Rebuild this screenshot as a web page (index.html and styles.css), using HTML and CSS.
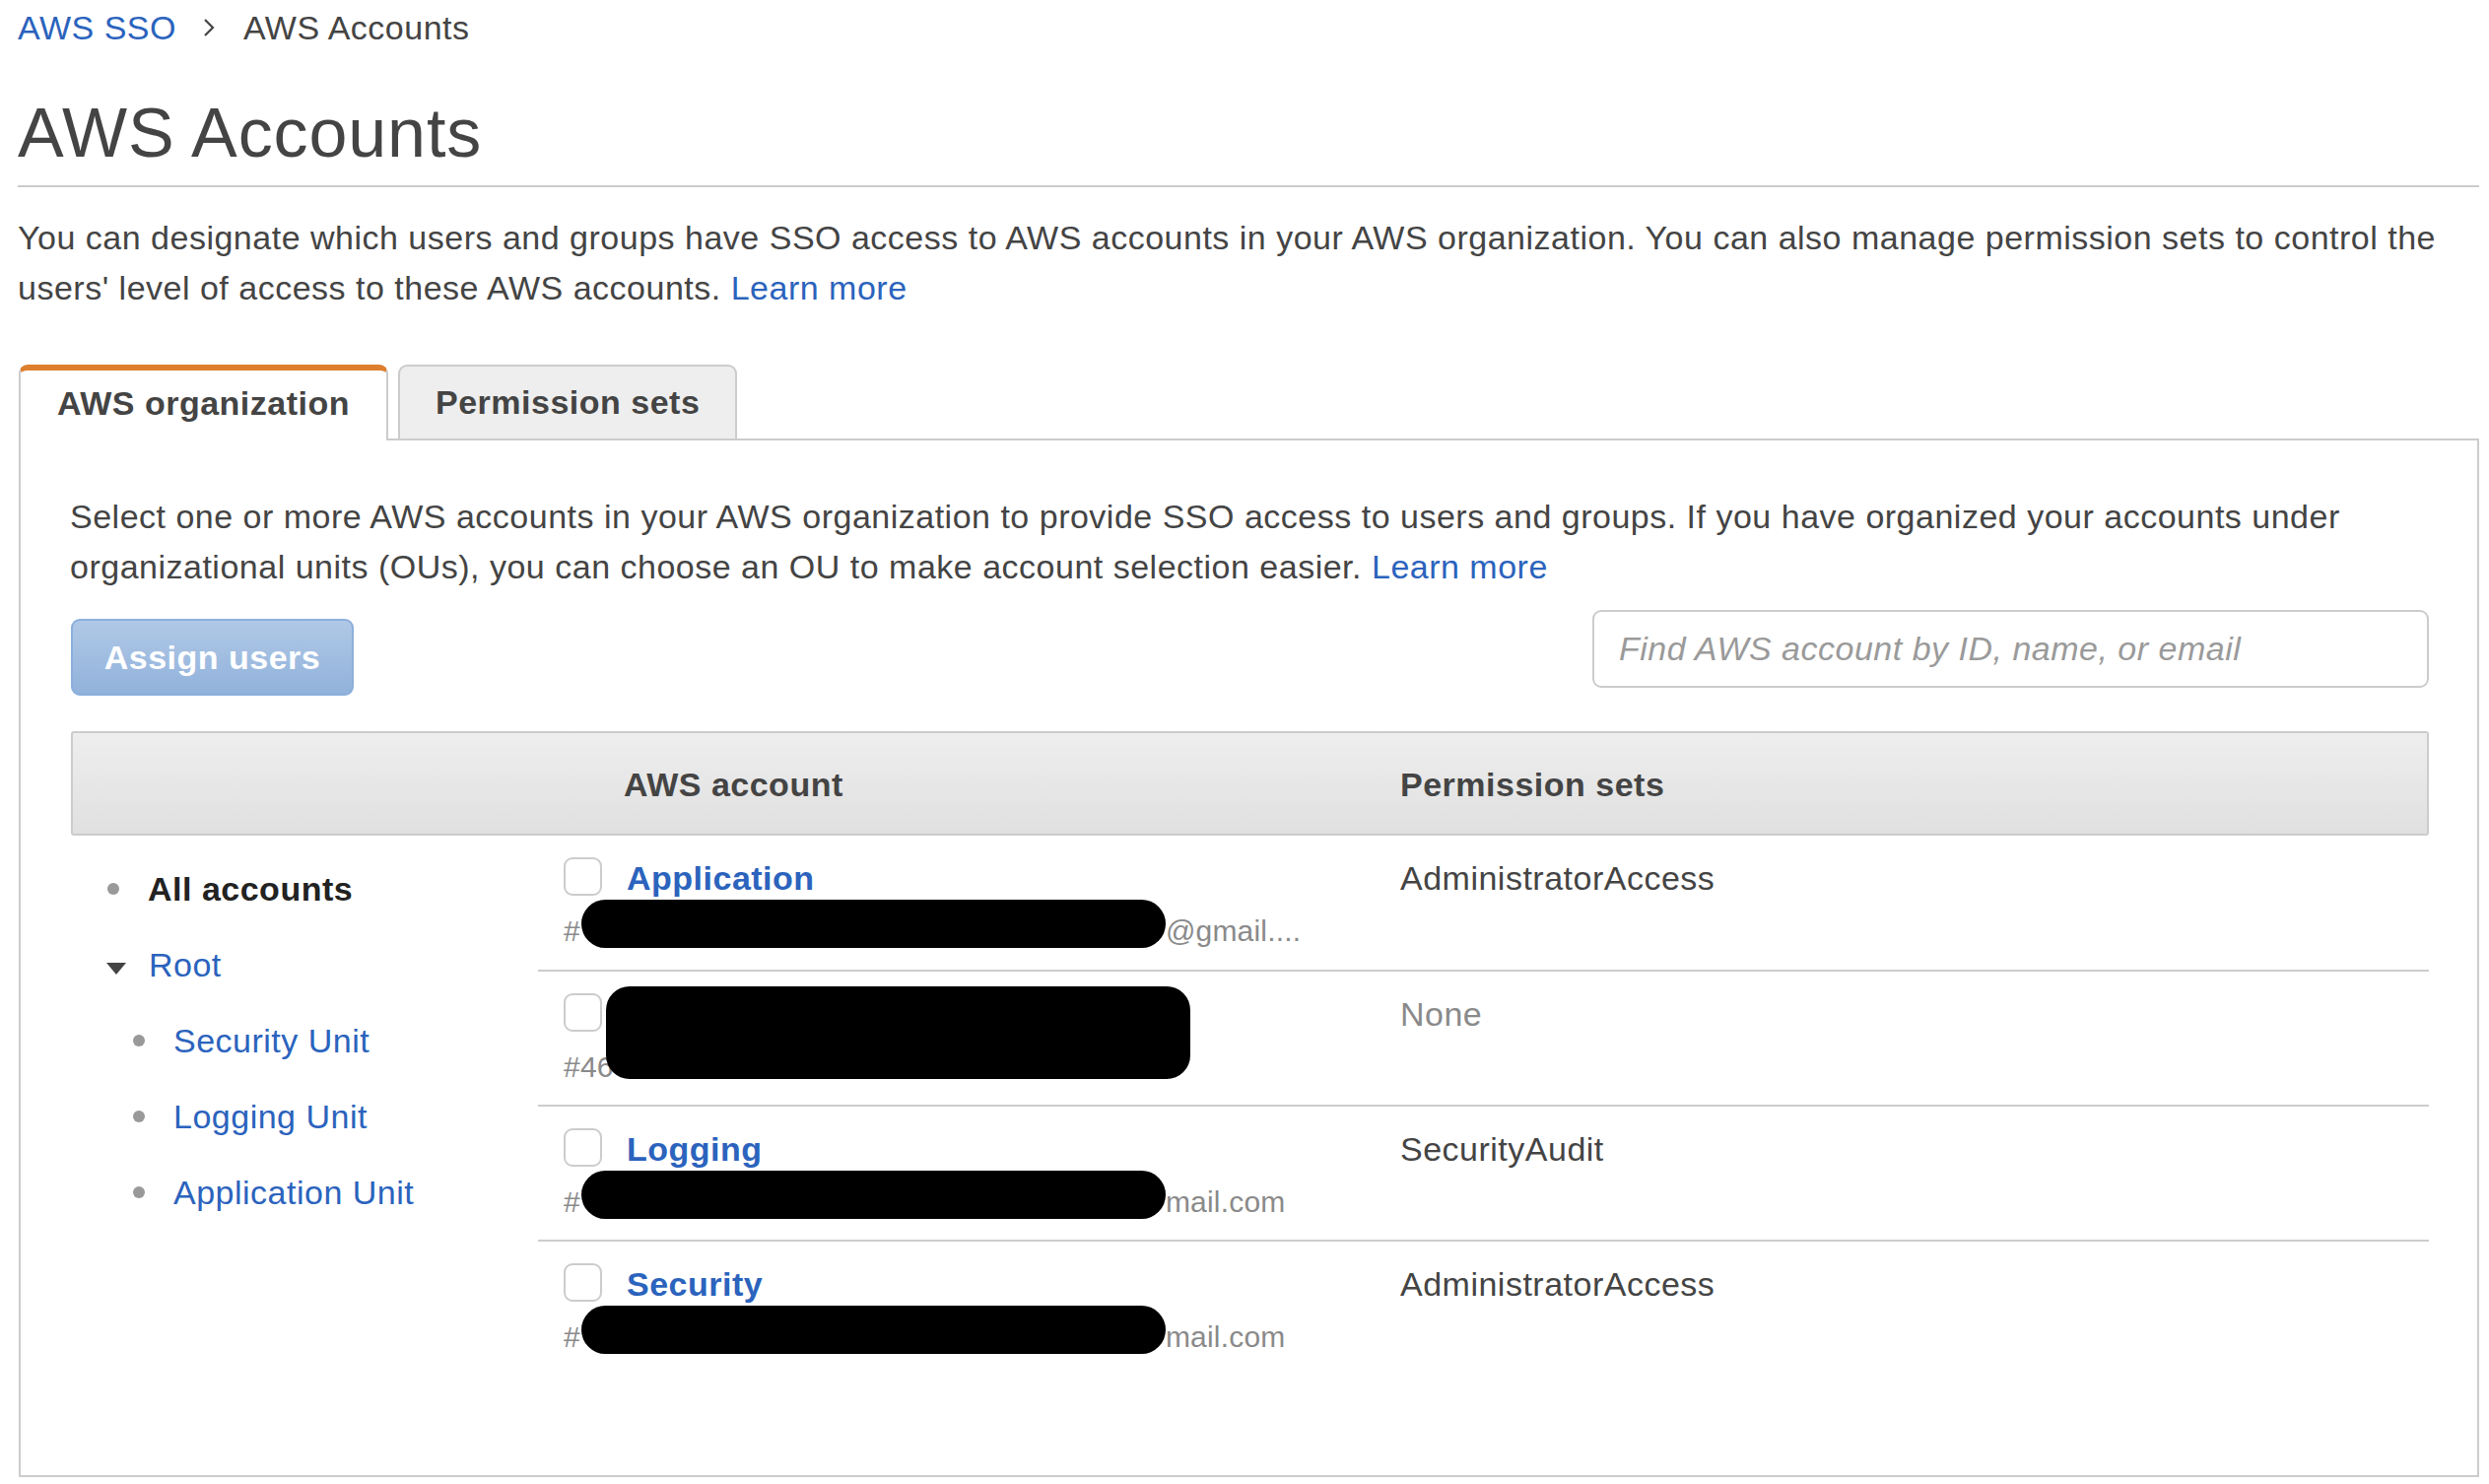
FILE: index.html
```html
<!DOCTYPE html>
<html lang="en">
<head>
<meta charset="utf-8">
<title>AWS Accounts</title>
<link rel="stylesheet" href="styles.css">
</head>
<body>
<div class="page">
  <nav class="breadcrumb">
    <a class="link" href="#">AWS SSO</a>
    <svg class="chev" width="12" height="20" viewBox="0 0 12 20"><path d="M2 2 L10 10 L2 18" fill="none" stroke="#444" stroke-width="2.2"/></svg>
    <span>AWS Accounts</span>
  </nav>
  <h1 class="title">AWS Accounts</h1>
  <p class="intro"><span>You can designate which users and groups have SSO access to AWS accounts in your AWS organization. You can also manage permission sets to control the users' level of access to these AWS accounts.</span> <a class="link" href="#">Learn more</a></p>

  <div class="tabs">
    <div class="tab active">AWS organization</div>
    <div class="tab">Permission sets</div>
  </div>

  <section class="panel">
    <p class="panel-intro"><span>Select one or more AWS accounts in your AWS organization to provide SSO access to users and groups. If you have organized your accounts under organizational units (OUs), you can choose an OU to make account selection easier.</span> <a class="link" href="#">Learn more</a></p>

    <div class="controls">
      <button class="btn" type="button">Assign users</button>
      <input class="search" type="text" placeholder="Find AWS account by ID, name, or email">
    </div>

    <div class="table">
      <div class="thead">
        <div class="th th-tree"></div>
        <div class="th th-account">AWS account</div>
        <div class="th th-perm">Permission sets</div>
      </div>
      <div class="tbody">
        <ul class="tree">
          <li class="tree-item"><span class="dot"></span><span class="tree-strong">All accounts</span></li>
          <li class="tree-item"><span class="caret"></span><a class="link" href="#">Root</a></li>
          <li class="tree-item child"><span class="dot"></span><a class="link" href="#">Security Unit</a></li>
          <li class="tree-item child"><span class="dot"></span><a class="link" href="#">Logging Unit</a></li>
          <li class="tree-item child"><span class="dot"></span><a class="link" href="#">Application Unit</a></li>
        </ul>
        <div class="rows">
          <div class="row">
            <div class="cell-account">
              <div class="name-line"><span class="checkbox"></span><a class="acct" href="#">Application</a></div>
              <div class="email">#<span class="redact"></span>@gmail....</div>
            </div>
            <div class="cell-perm">AdministratorAccess</div>
          </div>
          <div class="row">
            <div class="cell-account">
              <div class="name-line"><span class="checkbox"></span></div>
              <div class="email">#46</div>
              <span class="redact-block"></span>
            </div>
            <div class="cell-perm muted">None</div>
          </div>
          <div class="row">
            <div class="cell-account">
              <div class="name-line"><span class="checkbox"></span><a class="acct" href="#">Logging</a></div>
              <div class="email">#<span class="redact"></span>mail.com</div>
            </div>
            <div class="cell-perm">SecurityAudit</div>
          </div>
          <div class="row">
            <div class="cell-account">
              <div class="name-line"><span class="checkbox"></span><a class="acct" href="#">Security</a></div>
              <div class="email">#<span class="redact"></span>mail.com</div>
            </div>
            <div class="cell-perm">AdministratorAccess</div>
          </div>
        </div>
      </div>
    </div>
  </section>
</div>
</body>
</html>
```

FILE: styles.css
```css
* { box-sizing: border-box; }

html, body {
  margin: 0;
  padding: 0;
  background: #fff;
}

body {
  font-family: "Liberation Sans", Arial, Helvetica, sans-serif;
  font-size: 34px;
  letter-spacing: 0.5px;
  color: #444;
}

.page {
  padding: 0 10px 0 18px;
}

.link {
  color: #2b63bd;
  text-decoration: none;
}

/* breadcrumb */
.breadcrumb {
  display: flex;
  align-items: center;
  height: 55px;
  padding-top: 1px;
  line-height: 54px;
}
.chev {
  margin: 0 29px 0 27px;
}

/* title */
.title {
  margin: 40px 0 0;
  font-size: 70px;
  letter-spacing: 0.9px;
  font-weight: normal;
  line-height: 80px;
  color: #444;
  padding-bottom: 13px;
  border-bottom: 2px solid #cccccc;
}

.intro {
  margin: 26px 0 0;
  line-height: 51px;
}

/* tabs */
.tabs {
  display: flex;
  gap: 10px;
  margin-top: 52px;
  padding-left: 1px;
  position: relative;
  z-index: 1;
}
.tab {
  height: 75px;
  padding: 0 36px;
  display: flex;
  align-items: center;
  font-weight: bold;
  color: #444;
  background: #eeeeee;
  border: 2px solid #cccccc;
  border-bottom: none;
  border-radius: 9px 9px 0 0;
}
.tab.active {
  height: 77px;
  margin-bottom: -2px;
  padding: 0 37px 4px;
  background: #fff;
  border-top: 6px solid #dd7f2d;
}

/* panel */
.panel {
  margin-left: 1px;
  border: 2px solid #cccccc;
  padding: 52px 49px 100px 51px;
}

.panel-intro {
  margin: 0;
  line-height: 51px;
  margin-left: -1px;
}

.controls {
  display: flex;
  justify-content: space-between;
  align-items: flex-start;
  margin-top: 18px;
}

.btn {
  margin-top: 9px;
  width: 287px;
  height: 78px;
  font-family: inherit;
  font-size: 34px;
  letter-spacing: 0.5px;
  font-weight: bold;
  color: #fff;
  background: linear-gradient(#b0c8e6, #91b2db);
  border: 2px solid #8cafdb;
  border-radius: 9px;
  padding: 0;
}

.search {
  width: 849px;
  height: 79px;
  border: 2px solid #cccccc;
  border-radius: 9px;
  padding: 0 25px;
  font-family: inherit;
  font-size: 34px;
  letter-spacing: 0.5px;
  font-style: italic;
  color: #444;
  outline: none;
}
.search::placeholder {
  color: #9a9a9a;
  font-style: italic;
}

/* table */
.table {
  margin-top: 36px;
}
.thead {
  display: grid;
  grid-template-columns: 474px 875px 1fr;
  height: 106px;
  align-items: center;
  padding-top: 2px;
  background: linear-gradient(#eeeeee, #e0e0e0);
  border: 2px solid #cccccc;
  border-radius: 3px;
  font-weight: bold;
  color: #444;
}
.th-account {
  padding-left: 85px;
}
.th-perm {
  margin-left: -2px;
}

.tbody {
  display: grid;
  grid-template-columns: 474px 1fr;
}

.tree {
  list-style: none;
  margin: 0;
  padding: 16px 0 0;
}
.tree-item {
  display: flex;
  align-items: center;
  height: 77px;
  padding-left: 37px;
}
.tree-item.child {
  padding-left: 63px;
}
.dot {
  width: 12px;
  height: 12px;
  border-radius: 50%;
  background: #999;
  margin: 0 29px 2px 0;
}
.caret {
  width: 0;
  height: 0;
  border-left: 10px solid transparent;
  border-right: 10px solid transparent;
  border-top: 12px solid #444;
  margin: 6px 23px 0 -1px;
}
.tree-strong {
  font-weight: bold;
  color: #222;
}

.rows {
  display: flex;
  flex-direction: column;
}
.row {
  display: grid;
  grid-template-columns: 875px 1fr;
  height: 137px;
  border-bottom: 2px solid #cccccc;
}
.row:first-child {
  height: 138px;
}
.row:last-child {
  border-bottom: none;
}
.cell-account {
  position: relative;
  padding: 23px 0 0 26px;
}
.name-line {
  display: flex;
  align-items: center;
  height: 40px;
}
.checkbox {
  width: 39px;
  height: 39px;
  margin-top: -3px;
  border: 2px solid #cccccc;
  border-radius: 9px;
  margin-right: 25px;
  background: #fff;
}
.acct {
  color: #2b63bd;
  font-weight: bold;
  text-decoration: none;
}
.email {
  display: flex;
  align-items: center;
  height: 40px;
  margin-top: 14px;
  font-size: 30px;
  letter-spacing: 0.2px;
  color: #8a8a8a;
}
.redact {
  flex: none;
  width: 593px;
  height: 49px;
  margin: 0 0 15px 1px;
  border-radius: 25px;
  background: #000;
}
.redact-block {
  position: absolute;
  left: 69px;
  top: 15px;
  width: 593px;
  height: 94px;
  border-radius: 24px;
  background: #000;
}
.cell-perm {
  padding-top: 23px;
  line-height: 40px;
}
.muted {
  color: #8a8a8a;
}
```
